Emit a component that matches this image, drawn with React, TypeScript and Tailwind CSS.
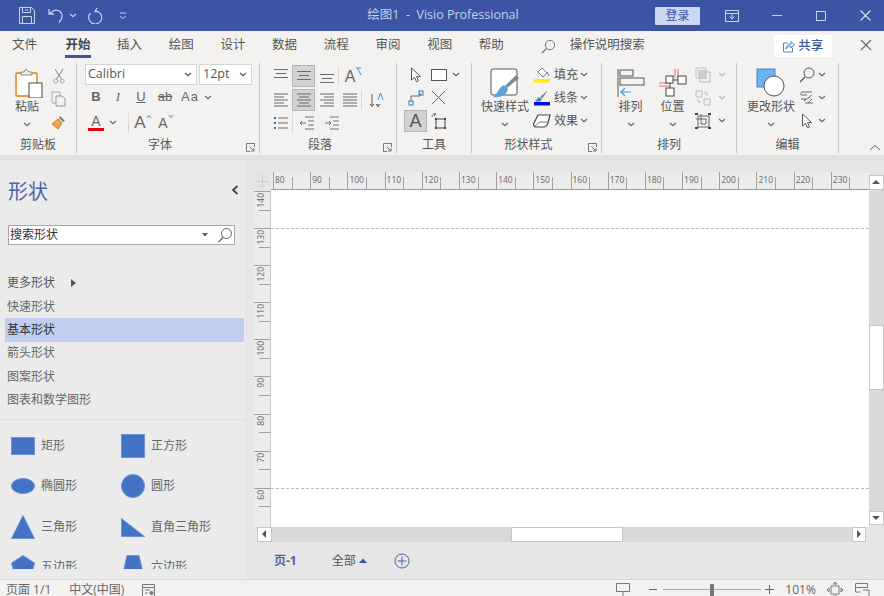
import type { ReactNode } from "react";

const font = "[font-family:'Open_Sans','Noto_Sans_CJK_SC',sans-serif]";

function Chev({ className = "text-[#666]" }: { className?: string }) {
  return (
    <svg width="8" height="5" viewBox="0 0 8 5" fill="none" className={className}>
      <path d="M1 1l3 2.6L7 1" stroke="currentColor" strokeWidth="1.2" />
    </svg>
  );
}

function Launcher() {
  return (
    <svg width="9" height="9" viewBox="0 0 9 9" fill="none" className="text-[#777] mb-[1px] mr-[4px]">
      <path d="M8.5 4V.5H.5v8H4" stroke="currentColor" />
      <path d="M3.5 3.5l4.5 4.5M8 5v3H5" stroke="#4a7fb5" />
    </svg>
  );
}

function Group({ w, label, launcher, children }: { w: string; label: string; launcher?: boolean; children: ReactNode }) {
  return (
    <div className={`${w} shrink-0 h-[90px] border-r border-[#c8c8c8] flex flex-col`}>
      <div className="h-[74px] flex">{children}</div>
      <div className="h-[16px] grid grid-cols-[1fr_auto_1fr] items-end">
        <span />
        <span className={`text-[12px] leading-[16px] text-[#555] ${launcher ? "mr-[16px]" : ""}`}>{label}</span>
        {launcher ? <span className="justify-self-end"><Launcher /></span> : <span />}
      </div>
    </div>
  );
}

function Big({ w, label, icon }: { w: string; label: string; icon: ReactNode }) {
  return (
    <div className={`${w} flex flex-col items-center pt-[4px]`}>
      <div className="h-[31px] flex items-center justify-center">{icon}</div>
      <span className="text-[12px] leading-[17px] text-[#555] whitespace-nowrap">{label}</span>
      <Chev className="text-[#666] mt-[7px]" />
    </div>
  );
}

function Row({ className = "", children }: { className?: string; children: ReactNode }) {
  return <div className={`h-[23px] flex items-center ${className}`}>{children}</div>;
}

function Cell({ w = "w-[23px]", sel, children }: { w?: string; sel?: boolean; children: ReactNode }) {
  return (
    <div className={`${w} h-[22px] shrink-0 flex items-center justify-center ${sel ? "bg-[#d2d2d2] border border-[#b4b4b4]" : ""}`}>
      {children}
    </div>
  );
}

function VSep({ h = "h-[20px]" }: { h?: string }) {
  return <div className={`w-px ${h} bg-[#d8d8d8] shrink-0`} />;
}

function Lines({ kind }: { kind: "top" | "mid" | "bot" | "l" | "c" | "r" | "j" }) {
  const map = {
    top: "M1 1.500h14M3 5.500h10M1 9.500h14",
    mid: "M1 3.500h14M3 7.500h10M1 11.500h14",
    bot: "M1 6.500h14M3 10.500h10M1 14.500h14",
    l: "M1 2h14M1 5h10M1 8h14M1 11h10M1 14h14",
    c: "M1 2h14M3 5h10M1 8h14M3 11h10M1 14h14",
    r: "M1 2h14M5 5h10M1 8h14M5 11h10M1 14h14",
    j: "M1 2h14M1 5h14M1 8h14M1 11h14M1 14h14",
  };
  return (
    <svg width="16" height="16" viewBox="0 0 16 16" fill="none">
      <path d={map[kind]} stroke="#686868" strokeWidth="1" />
    </svg>
  );
}

function Pointer({ size = 16 }: { size?: number }) {
  return (
    <svg width={size} height={size} viewBox="0 0 16 16" fill="none">
      <path d="M3.5 1v12l3-2.6 2 4.4 2-1-2-4.2h4z" stroke="#555" strokeWidth="1" fill="#fff" />
    </svg>
  );
}

function TitleBar() {
  const ic = "#c9d3ec";
  return (
    <div className="h-[31px] bg-[#3b54a4] flex items-center text-[#d5dcf0]">
      <div className="w-[20px]" />
      <svg width="16" height="17" viewBox="0 0 16 17" fill="none" className="ml-[-1px]">
        <path d="M.5.5h12l3 3v13H.5z" stroke={ic} />
        <path d="M3.5.5v5h8v-5M3.5 16.5v-7h9v7M6 3h3" stroke={ic} />
      </svg>
      <svg width="18" height="16" viewBox="0 0 18 16" fill="none" className="ml-[13px]">
        <path d="M1 1v5h5M1.500 6C4 2 9 1 12 3.500s3 7-1 11" stroke={ic} strokeWidth="1.300" />
      </svg>
      <Chev className="text-[#c9d3ec] ml-[3px]" />
      <svg width="17" height="17" viewBox="0 0 17 17" fill="none" className="ml-[10px]">
        <path d="M10 1l-2 3.500 4 .5M8.500 4a6.500 6.500 0 1 1-5 2" stroke={ic} strokeWidth="1.200" />
      </svg>
      <svg width="8" height="8" viewBox="0 0 8 8" fill="none" className="ml-[15px]">
        <path d="M1 1h6M1 4l3 2.500L7 4" stroke={ic} />
      </svg>
      <div className="w-[236px]" />
      <span className="w-[160px] text-center text-[12.5px] whitespace-nowrap text-[#c8d2ec]">绘图1&nbsp; - &nbsp;Visio Professional</span>
      <div className="w-[132px]" />
      <div className="w-[45px] h-[18px] bg-[#cdd8f3] rounded-[1px] text-[#3b54a4] text-[12px] leading-[18px] text-center">登录</div>
      <svg width="14" height="12" viewBox="0 0 14 12" fill="none" className="ml-[25px]">
        <path d="M.5.5h13v11H.5zM.5 3.500h13M7 3.500V9M4.500 6.500L7 9l2.500-2.500" stroke={ic} />
      </svg>
      <div className="w-[10px] h-px bg-[#c9d3ec] ml-[33px]" />
      <div className="w-[10px] h-[10px] border border-[#c9d3ec] ml-[34px]" />
      <svg width="11" height="11" viewBox="0 0 11 11" fill="none" className="ml-[34px]">
        <path d="M.5.5l10 10M10.500.5l-10 10" stroke="#dfe5f5" strokeWidth="1.100" />
      </svg>
    </div>
  );
}

function TabBar() {
  const tabs = ["插入", "绘图", "设计", "数据", "流程", "审阅", "视图", "帮助"];
  return (
    <div className="h-[31px] flex items-start pt-[4px] text-[12.500px] text-[#555]">
      <span className="ml-[12px] w-[26px] leading-[20px] whitespace-nowrap">文件</span>
      <div className="ml-[27px] w-[26px] flex flex-col items-center">
        <span className="leading-[20px] font-bold text-[#444] whitespace-nowrap">开始</span>
        <div className="h-[3px] w-[26px] bg-[#3b54a4]" />
      </div>
      {tabs.map((t, i) => (
        <span key={t} className={`${i === 0 ? "ml-[26px]" : "ml-[25.700px]"} w-[26px] leading-[20px] whitespace-nowrap`}>{t}</span>
      ))}
      <svg width="15" height="15" viewBox="0 0 15 15" fill="none" className="ml-[36px] mt-[4px]">
        <circle cx="9" cy="6" r="4.700" stroke="#777" />
        <path d="M5.500 9.500L1 14" stroke="#777" strokeWidth="1.300" />
      </svg>
      <span className="ml-[14px] leading-[20px] text-[12.500px] whitespace-nowrap">操作说明搜索</span>
      <div className="ml-[129px] w-[58px] h-[22px] bg-white flex items-center justify-center gap-[3px] text-[#3b54a4] font-medium">
        <svg width="13" height="13" viewBox="0 0 13 13" fill="none">
          <path d="M6 3H1.500v9h9V8M4 9c0-3 2-5 5-5V1.500L12.500 5 9 8V6C7 6 5 7 4 9z" stroke="#5b7fc0" />
        </svg>
        <span className="leading-[20px] whitespace-nowrap">共享</span>
      </div>
      <svg width="12" height="12" viewBox="0 0 12 12" fill="none" className="ml-[28px] mt-[4px]">
        <path d="M1 1l10 10M11 1L1 11" stroke="#666" strokeWidth="1.100" />
      </svg>
    </div>
  );
}

function Ribbon() {
  return (
    <div className="h-[93px] flex items-start pt-[1px] text-[#555]">
      <Group w="w-[77px]" label="剪贴板">
        <Big
          w="w-[54px]"
          label="粘贴"
          icon={
            <svg width="28" height="30" viewBox="0 0 28 30" fill="none" className="ml-[3px]">
              <rect x="1" y="5" width="21" height="23" rx="1" fill="#fff" stroke="#e59a3c" strokeWidth="1.800" />
              <path d="M6 6V4h3l2-3 3 3h3v3H6z" fill="#f3f2f1" stroke="#888" />
              <rect x="14" y="15" width="13" height="15" fill="#fff" stroke="#444" />
            </svg>
          }
        />
        <div className="w-[16px] flex flex-col items-center pt-[1px] ml-[-3px]">
          <Row>
            <svg width="12" height="16" viewBox="0 0 12 16" fill="none">
              <path d="M2 1l6.500 10M10 1L3.500 11" stroke="#999" strokeWidth="1.200" />
              <circle cx="2.800" cy="13" r="2" stroke="#aaa" />
              <circle cx="9.200" cy="13" r="2" stroke="#aaa" />
            </svg>
          </Row>
          <Row>
            <svg width="16" height="16" viewBox="0 0 16 16" fill="none">
              <path d="M1 1h8v11H1z" stroke="#aaa" />
              <path d="M5 5h6l3 3v7H5z" fill="#f3f2f1" stroke="#999" />
            </svg>
          </Row>
          <Row>
            <svg width="16" height="16" viewBox="0 0 16 16" fill="none">
              <path d="M9 2l5 5-2 1-4-4z" fill="#777" />
              <path d="M7 5l4 4-4 6-6-5z" fill="#eea94a" stroke="#c9822a" />
            </svg>
          </Row>
        </div>
      </Group>

      <Group w="w-[183px]" label="字体" launcher>
        <div className="pl-[8px] pt-[1px] flex flex-col">
          <div className="flex gap-[2px]">
            <div className="w-[112px] h-[21px] bg-white border border-[#d4d4d4] flex items-center justify-between pl-[2px] pr-[4px]">
              <span className="text-[12.500px] [font-family:'Open_Sans',sans-serif] text-[#555]">Calibri</span>
              <Chev className="text-[#555]" />
            </div>
            <div className="w-[53px] h-[21px] bg-white border border-[#d4d4d4] flex items-center justify-between pl-[3px] pr-[4px]">
              <span className="text-[12.500px] [font-family:'Open_Sans',sans-serif] text-[#555]">12pt</span>
              <Chev className="text-[#555]" />
            </div>
          </div>
          <div className="h-[24px] flex items-center text-[#666] [font-family:'Liberation_Sans',sans-serif]">
            <span className="w-[22px] text-center font-bold text-[13px]">B</span>
            <span className="w-[22px] text-center italic text-[13px] [font-family:'Liberation_Serif',serif]">I</span>
            <span className="w-[24px] text-center underline text-[13px]">U</span>
            <span className="w-[24px] text-center line-through text-[13px]">ab</span>
            <span className="w-[24px] text-center text-[13px] tracking-[1px] ml-[1px]">Aa</span>
            <Chev className="text-[#666] ml-[2px]" />
          </div>
          <div className="h-[23px] mt-[2px] flex items-center text-[#666] [font-family:'Liberation_Sans',sans-serif]">
            <div className="w-[22px] flex flex-col items-center">
              <span className="text-[14px] leading-[13px]">A</span>
              <div className="w-[16px] h-[3px] bg-[#e60012]" />
            </div>
            <Chev className="text-[#666] ml-[2px]" />
            <div className="ml-[11px]"><VSep /></div>
            <div className="w-[30px] ml-[-1px] flex justify-center items-start">
              <span className="text-[17px] leading-[18px]">A</span>
              <svg width="6" height="5" viewBox="0 0 6 5" fill="none"><path d="M1 4l2-2.500L5 4" stroke="#4a90c8" /></svg>
            </div>
            <div className="w-[22px] ml-[-3px] flex justify-center items-start">
              <span className="text-[14px] leading-[18px]">A</span>
              <svg width="6" height="5" viewBox="0 0 6 5" fill="none"><path d="M1 1l2 2.500L5 1" stroke="#4a90c8" /></svg>
            </div>
          </div>
        </div>
      </Group>

      <Group w="w-[137px]" label="段落" launcher>
        <div className="pl-[9px] pt-[1px] flex flex-col">
          <Row>
            <Cell><Lines kind="top" /></Cell>
            <Cell sel><Lines kind="mid" /></Cell>
            <Cell><Lines kind="bot" /></Cell>
            <VSep />
            <Cell w="w-[30px]">
              <span className="text-[16px] [font-family:'Liberation_Sans',sans-serif] text-[#666] leading-[18px] mt-[3px]">A</span>
              <svg width="8" height="9" viewBox="0 0 8 9" fill="none" className="mb-[9px]"><path d="M1 1h5M2.500 1L6 8" stroke="#4a90c8" /></svg>
            </Cell>
          </Row>
          <Row className="mt-[1px]">
            <Cell><Lines kind="l" /></Cell>
            <Cell sel><Lines kind="c" /></Cell>
            <Cell><Lines kind="r" /></Cell>
            <Cell><Lines kind="j" /></Cell>
            <VSep />
            <Cell w="w-[30px]">
              <svg width="16" height="18" viewBox="0 0 16 18" fill="none">
                <path d="M3 3v12M1 13l2 2.500L5 13M9 13v2.500M7 13l2 2.500 2-2.500" stroke="#555" />
                <path d="M9 9l2.500-7L14 9" stroke="#4a90c8" />
              </svg>
            </Cell>
          </Row>
          <Row>
            <Cell>
              <svg width="16" height="16" viewBox="0 0 16 16" fill="none">
                <path d="M5 3h10M5 8h10M5 13h10" stroke="#707070" />
                <path d="M1 2h2v2H1zM1 7h2v2H1zM1 12h2v2H1z" fill="#2b7cb8" />
              </svg>
            </Cell>
            <VSep />
            <Cell w="w-[27px]">
              <svg width="16" height="14" viewBox="0 0 16 14" fill="none">
                <path d="M6 1h9M9 5h6M9 9h6M6 13h9" stroke="#707070" />
                <path d="M7 7H1M3 5L1 7l2 2" stroke="#2b7cb8" />
              </svg>
            </Cell>
            <Cell>
              <svg width="16" height="14" viewBox="0 0 16 14" fill="none">
                <path d="M6 1h9M9 5h6M9 9h6M6 13h9" stroke="#707070" />
                <path d="M1 7h6M5 5l2 2-2 2" stroke="#2b7cb8" />
              </svg>
            </Cell>
          </Row>
        </div>
      </Group>

      <Group w="w-[75px]" label="工具">
        <div className="pl-[7px] flex flex-col">
          <Row>
            <Cell><Pointer /></Cell>
            <Cell><div className="w-[16px] h-[12px] border border-[#555] bg-white" /></Cell>
            <Chev className="text-[#666] ml-[2px]" />
          </Row>
          <Row>
            <Cell>
              <svg width="16" height="16" viewBox="0 0 16 16" fill="none">
                <path d="M3 11V6h9V3" stroke="#666" />
                <rect x="1" y="11" width="4" height="4" stroke="#2b7cb8" />
                <rect x="11" y="1" width="4" height="4" stroke="#2b7cb8" />
              </svg>
            </Cell>
            <Cell>
              <svg width="15" height="15" viewBox="0 0 15 15" fill="none"><path d="M1 1l13 13M14 1L1 14" stroke="#666" /></svg>
            </Cell>
          </Row>
          <Row>
            <Cell sel><span className="text-[18px] leading-[20px] text-[#555] [font-family:'Liberation_Sans',sans-serif]">A</span></Cell>
            <Cell>
              <svg width="16" height="16" viewBox="0 0 16 16" fill="none">
                <path d="M5 6h9v9H5z" stroke="#444" />
                <path d="M4 5h2v2H4zM13 5h2v2h-2zM4 14h2v2H4zM13 14h2v2h-2z" fill="#444" />
                <path d="M1 4c0-2 1-3 3-3M3 0l2 1-2 2" stroke="#2b7cb8" />
              </svg>
            </Cell>
          </Row>
        </div>
      </Group>

      <Group w="w-[130px]" label="形状样式" launcher>
        <Big
          w="w-[66px]"
          label="快速样式"
          icon={
            <svg width="30" height="30" viewBox="0 0 30 30" fill="none">
              <rect x="1" y="1" width="26" height="26" rx="2" fill="#fff" stroke="#555" />
              <path d="M29 10L17 20l-2-2 11-11z" fill="#7d8a96" />
              <path d="M14 17l4 4c-1 6-8 9-15 8 4-2 5-9 11-12z" fill="#5ba3dc" />
            </svg>
          }
        />
        <div className="flex flex-col ml-[-6px]">
          {[
            { t: "填充", i: <svg width="18" height="18" viewBox="0 0 18 18" fill="none"><path d="M9 2l5 5-4 4-5-5z" fill="#fff" stroke="#777" /><path d="M14 6l2 4" stroke="#3f86c6" /><rect x="1" y="13" width="16" height="3.500" fill="#ffee00" /></svg> },
            { t: "线条", i: <svg width="18" height="18" viewBox="0 0 18 18" fill="none"><path d="M15 1L7 8l2 2z" fill="#7d8a96" /><path d="M6 8l3 3c-2 2-5 2-7 1 2-1 2-3 4-4z" fill="#3f86c6" /><rect x="1" y="13" width="16" height="3.500" fill="#0010d8" /></svg> },
            { t: "效果", i: <svg width="18" height="14" viewBox="0 0 18 14" fill="none"><path d="M5 1h12l-2 8c-1 2-2 4-4 4H3C1 13 0 11 1 9z" fill="#fff" stroke="#444" strokeWidth="1.200" /><path d="M2 12l5-4h9" stroke="#777" /></svg> },
          ].map((r) => (
            <Row key={r.t}>
              <div className="w-[20px] flex justify-center">{r.i}</div>
              <span className="text-[12px] ml-[2px] whitespace-nowrap">{r.t}</span>
              <Chev className="text-[#666] ml-[2px]" />
            </Row>
          ))}
        </div>
      </Group>

      <Group w="w-[135px]" label="排列">
        <div className="pl-[7px] flex">
          <Big
            w="w-[43px]"
            label="排列"
            icon={
              <svg width="28" height="30" viewBox="0 0 28 30" fill="none">
                <path d="M1 1v28" stroke="#555" />
                <rect x="3" y="2" width="13" height="6" stroke="#555" />
                <rect x="3" y="10" width="24" height="7" stroke="#555" />
                <path d="M14 24H3M8 20l-4 4 4 4" stroke="#3f9adf" strokeWidth="1.200" />
              </svg>
            }
          />
          <Big
            w="w-[41px]"
            label="位置"
            icon={
              <svg width="30" height="30" viewBox="0 0 30 30" fill="none">
                <path d="M17 1v9M20 1v9M1 15h10M1 18h10" stroke="#e66" />
                <rect x="8" y="8" width="7" height="7" fill="#fff" stroke="#444" />
                <rect x="20" y="8" width="8" height="8" fill="#fff" stroke="#444" />
                <rect x="8" y="20" width="8" height="8" fill="#fff" stroke="#444" />
                <path d="M15 12h5M12 15v5" stroke="#444" />
              </svg>
            }
          />
          <div className="flex flex-col ml-[2px]">
            <Row>
              <svg width="16" height="16" viewBox="0 0 16 16" fill="none">
                <path d="M1 1h10v10H1z" stroke="#bbb" />
                <rect x="3" y="3" width="9" height="9" fill="#ccc" />
                <path d="M12 5h3v10H5v-3" stroke="#bbb" />
              </svg>
              <Chev className="text-[#bbb] ml-[7px]" />
            </Row>
            <Row>
              <svg width="16" height="16" viewBox="0 0 16 16" fill="none">
                <path d="M1 1h6v6H1zM9 9h6v6H9zM9 3h3v3M3 9v3h3" stroke="#bbb" />
              </svg>
              <Chev className="text-[#bbb] ml-[7px]" />
            </Row>
            <Row>
              <svg width="16" height="16" viewBox="0 0 16 16" fill="none">
                <rect x="3" y="3" width="11" height="11" stroke="#666" />
                <path d="M6 1v10h5V6H1" stroke="#666" />
                <path d="M0 0h3v2H0zM13 0h3v2h-3zM0 14h3v2H0zM13 14h3v2h-3z" fill="#444" />
              </svg>
              <Chev className="text-[#666] ml-[7px]" />
            </Row>
          </div>
        </div>
      </Group>

      <Group w="w-[102px]" label="编辑">
        <Big
          w="w-[68px]"
          label="更改形状"
          icon={
            <svg width="30" height="30" viewBox="0 0 30 30" fill="none">
              <rect x="1" y="1" width="18" height="18" fill="#6db3f0" stroke="#3f86c6" />
              <circle cx="18" cy="18" r="10" fill="#fff" stroke="#555" />
            </svg>
          }
        />
        <div className="flex flex-col ml-[-6px]">
          <Row>
            <svg width="16" height="16" viewBox="0 0 16 16" fill="none">
              <circle cx="10" cy="6" r="5" stroke="#555" />
              <path d="M6 10l-5 5" stroke="#555" strokeWidth="1.300" />
            </svg>
            <Chev className="text-[#666] ml-[3px]" />
          </Row>
          <Row>
            <svg width="16" height="14" viewBox="0 0 16 14" fill="none">
              <path d="M3 1h10M3 4h5M13 4l-8 6M2 8h5M6 12h8M13 8l-4 4M3 1c-2 1-2 3 0 3" stroke="#666" />
            </svg>
            <Chev className="text-[#666] ml-[3px]" />
          </Row>
          <Row>
            <Pointer />
            <Chev className="text-[#666] ml-[3px]" />
          </Row>
        </div>
      </Group>

      <div className="flex-1 h-[90px] flex items-end justify-end pr-[3px]">
        <svg width="12" height="7" viewBox="0 0 12 7" fill="none" className="mb-[2px]"><path d="M1 6l5-4.500L11 6" stroke="#666" /></svg>
      </div>
    </div>
  );
}

const shapes: { label: string; icon: ReactNode }[] = [
  { label: "矩形", icon: <rect x="0.5" y="3.500" width="23" height="17" fill="#4472c4" stroke="#6e92d2" /> },
  { label: "正方形", icon: <rect x="0.5" y="0.500" width="23" height="23" fill="#4472c4" stroke="#6e92d2" /> },
  { label: "椭圆形", icon: <ellipse cx="12" cy="12" rx="11.500" ry="7.500" fill="#4472c4" stroke="#6e92d2" /> },
  { label: "圆形", icon: <circle cx="12" cy="12" r="11.500" fill="#4472c4" stroke="#6e92d2" /> },
  { label: "三角形", icon: <path d="M12 .5L23.500 23.500H.5z" fill="#4472c4" stroke="#6e92d2" /> },
  { label: "直角三角形", icon: <path d="M.5 3.500L23.500 21.500H.5z" fill="#4472c4" stroke="#6e92d2" /> },
  { label: "五边形", icon: <path d="M12 .5L23.500 8l-4 15.500H4.500L.5 8z" fill="#4472c4" stroke="#6e92d2" /> },
  { label: "六边形", icon: <path d="M6 .5h12l5.500 23.500H.5z" fill="#4472c4" stroke="#6e92d2" /> },
];

function Sidebar() {
  const items = ["快速形状", "基本形状", "箭头形状", "图案形状", "图表和数学图形"];
  return (
    <div className="w-[245px] shrink-0 h-[419px] bg-[#ebebeb] flex flex-col overflow-hidden">
      <div className="h-[56px] pt-[17px] pl-[8px] pr-[6px] flex items-start justify-between">
        <span className="text-[20px] leading-[30px] text-[#4f64a8]">形状</span>
        <svg width="8" height="10" viewBox="0 0 8 10" fill="none" className="mt-[8px]"><path d="M6.500 1L2 5l4.500 4" stroke="#444" strokeWidth="1.800" /></svg>
      </div>
      <div className="mx-[8px] w-[227px] mt-[9px] h-[20px] bg-white border border-[#a8a8a8] flex items-center pl-[1px] pr-[1px]">
        <span className="text-[12px] text-[#333] flex-1 whitespace-nowrap">搜索形状</span>
        <svg width="6" height="4" viewBox="0 0 6 4" className="mr-[9px]"><path d="M0 0h6L3 3.500z" fill="#555" /></svg>
        <svg width="16" height="16" viewBox="0 0 16 16" fill="none">
          <circle cx="9.500" cy="6.500" r="5" stroke="#666" />
          <path d="M6 10.500L1.500 15" stroke="#666" strokeWidth="1.200" />
        </svg>
      </div>
      <div className="mt-[26px] flex flex-col">
        <div className="h-[24px] mx-[5px] pl-[2px] flex items-center text-[12px] text-[#555]">
          <span className="whitespace-nowrap">更多形状</span>
          <svg width="5" height="8" viewBox="0 0 5 8" className="ml-[16px]"><path d="M0 0l5 4-5 4z" fill="#555" /></svg>
        </div>
        {items.map((t, i) => (
          <div
            key={t}
            className={`h-[23.400px] mx-[5px] w-[239px] pl-[2px] flex items-center text-[12px] whitespace-nowrap ${i === 1 ? "bg-[#c0cfef] text-[#333]" : "text-[#666]"}`}
          >
            {t}
          </div>
        ))}
      </div>
      <div className="mt-[7px] h-px bg-[#e0e0e0]" />
      <div className="mt-[6px] h-[143px] overflow-hidden grid grid-cols-[110px_1fr] auto-rows-[40.300px] pl-[11px]">
        {shapes.map((s) => (
          <div key={s.label} className="flex items-center gap-[6px]">
            <svg width="24" height="24" viewBox="0 0 24 24" className="shrink-0">{s.icon}</svg>
            <span className="text-[12px] text-[#666] whitespace-nowrap">{s.label}</span>
          </div>
        ))}
      </div>
    </div>
  );
}

function TopRuler() {
  const labels = [80, 90, 100, 110, 120, 130, 140, 150, 160, 170, 180, 190, 200, 210, 220, 230];
  return (
    <div className="h-[18px] flex-1 flex overflow-hidden bg-[#ececec] border-b border-[#9a9a9a] pl-[2px]">
      {labels.map((n) => (
        <div key={n} className="w-[37.200px] shrink-0 flex">
          <div className="w-[18.600px] h-full border-l border-[#a0a0a0] text-[8.500px] leading-[16px] pl-[1px] text-[#666]">{n}</div>
          <div className="w-[18.600px] h-full flex items-end">
            <div className="w-px h-[12px] bg-[#a0a0a0]" />
          </div>
        </div>
      ))}
    </div>
  );
}

function LeftRuler() {
  const labels = [140, 130, 120, 110, 100, 90, 80, 70, 60];
  return (
    <div className="w-[17px] shrink-0 flex flex-col overflow-hidden bg-[#ececec] border-r border-[#c8c8c8] pt-[1px]">
      {labels.map((n) => (
        <div key={n} className="h-[37.100px] shrink-0 flex flex-col">
          <div className="h-[18.550px] border-t border-[#a0a0a0] flex items-start pl-[2px]">
            <span className="[writing-mode:vertical-rl] rotate-180 text-[8.500px] leading-[10px] pb-[1px] text-[#666] whitespace-nowrap">{n}</span>
          </div>
          <div className="h-[18.550px] flex justify-end">
            <div className="h-px w-[11px] bg-[#a0a0a0]" />
          </div>
        </div>
      ))}
    </div>
  );
}

function Arrow({ d }: { d: "up" | "down" | "left" | "right" }) {
  const p = { up: "M0 5h8L4 1z", down: "M0 1h8L4 5z", left: "M5 0v8L1 4z", right: "M1 0v8l4-4z" }[d];
  return (
    <div className="w-[14.500px] h-[14.500px] bg-white border border-[#c6c6c6] flex items-center justify-center shrink-0">
      <svg width="8" height="8" viewBox={d === "up" || d === "down" ? "0 -1 8 8" : "-1 0 8 8"}><path d={p} fill="#555" /></svg>
    </div>
  );
}

function Canvas() {
  return (
    <div className="flex-1 min-w-0 h-[419px] bg-[#e6e6e6] flex flex-col">
      <div className="flex h-[355px] mt-[12px]">
        <div className="w-[624px] pl-[9px] shrink-0 flex flex-col">
          <div className="flex shrink-0">
            <div className="w-[17px] h-[18px] shrink-0 bg-[#e4e4e4] flex items-center justify-center">
              <svg width="13" height="13" viewBox="0 0 13 13" fill="none"><path d="M6.500 0v13M0 6.500h13" stroke="#cfcfcf" /></svg>
            </div>
            <TopRuler />
          </div>
          <div className="flex h-[337px]">
            <LeftRuler />
            <div className="flex-1 bg-white overflow-hidden pt-[37.500px]">
              <div className="h-[261px] border-y border-dashed border-[#b8b8b8]" />
            </div>
          </div>
        </div>
        <div className="w-[15px] flex flex-col bg-[#d9d9d9] h-[350px] mt-[3px]">
          <Arrow d="up" />
          <div className="h-[135px]" />
          <div className="w-[14.500px] h-[65px] bg-white border border-[#c6c6c6]" />
          <div className="h-[121px]" />
          <Arrow d="down" />
        </div>
      </div>
      <div className="h-[15px] ml-[12px] w-[609px] flex bg-[#d9d9d9]">
        <Arrow d="left" />
        <div className="w-[239px]" />
        <div className="w-[112px] h-[15px] bg-white border border-[#c6c6c6]" />
        <div className="flex-1" />
        <Arrow d="right" />
      </div>
      <div className="h-[37px] flex items-center text-[12px] pl-[29px]">
        <span className="font-bold text-[#4f64a8] whitespace-nowrap">页-1</span>
        <span className="ml-[35px] text-[#555] whitespace-nowrap">全部</span>
        <svg width="8" height="5" viewBox="0 0 8 5" className="ml-[3px]"><path d="M0 5l4-4.500L8 5z" fill="#3b54a4" /></svg>
        <svg width="16" height="16" viewBox="0 0 16 16" fill="none" className="ml-[27px]">
          <circle cx="8" cy="8" r="7" stroke="#4f64a8" />
          <path d="M8 3.500v9M3.500 8h9" stroke="#4f64a8" />
        </svg>
      </div>
    </div>
  );
}

function StatusBar() {
  return (
    <div className="h-[17px] bg-[#f3f2f1] border-t border-[#d8d8d8] text-[12px] leading-[12px] text-[#666] overflow-hidden">
      <div className="h-[19px] flex items-center">
        <span className="ml-[6px] whitespace-nowrap">页面 1/1</span>
        <span className="ml-[18px] whitespace-nowrap">中文(中国)</span>
        <svg width="14" height="14" viewBox="0 0 14 14" fill="none" className="ml-[18px]">
          <path d="M.5 1.500h12v12H.5zM.5 4.500h12M3 7h5M3 10h3" stroke="#777" />
          <circle cx="9.500" cy="10" r="2" fill="#777" />
        </svg>
        <svg width="14" height="16" viewBox="0 0 14 16" fill="none" className="ml-[460px]">
          <path d="M.5 1.500h13v8H.5zM7 9.500V16" stroke="#777" />
        </svg>
        <div className="ml-[19px] w-[8px] h-px bg-[#666]" />
        <div className="ml-[6px] w-[98px] flex items-center">
          <div className="w-[47px] h-px bg-[#aaa]" />
          <div className="w-[4px] h-[12px] bg-[#777]" />
          <div className="flex-1 h-px bg-[#aaa]" />
        </div>
        <svg width="9" height="9" viewBox="0 0 9 9" fill="none" className="ml-[4px]"><path d="M4.500 0v9M0 4.500h9" stroke="#666" /></svg>
        <span className="ml-[11px] whitespace-nowrap">101%</span>
        <svg width="16" height="16" viewBox="0 0 16 16" fill="none" className="ml-[11px]">
          <path d="M4 4h8v8H4zM8 0l2 2H6zM8 16l-2-2h4zM0 8l2-2v4zM16 8l-2 2V6z" stroke="#777" />
        </svg>
        <svg width="15" height="16" viewBox="0 0 15 16" fill="none" className="ml-[12px]">
          <path d="M.5 1.500h12v4H.5zM.5 5.500V10h5M8 8h6v8" stroke="#777" />
        </svg>
      </div>
    </div>
  );
}

export default function App() {
  return (
    <div className={`w-[884px] h-[596px] overflow-hidden bg-[#f3f2f1] flex flex-col ${font}`}>
      <TitleBar />
      <TabBar />
      <Ribbon />
      <div className="h-[5px] bg-[#e2e1e0]" />
      <div className="flex">
        <Sidebar />
        <Canvas />
      </div>
      <StatusBar />
    </div>
  );
}
